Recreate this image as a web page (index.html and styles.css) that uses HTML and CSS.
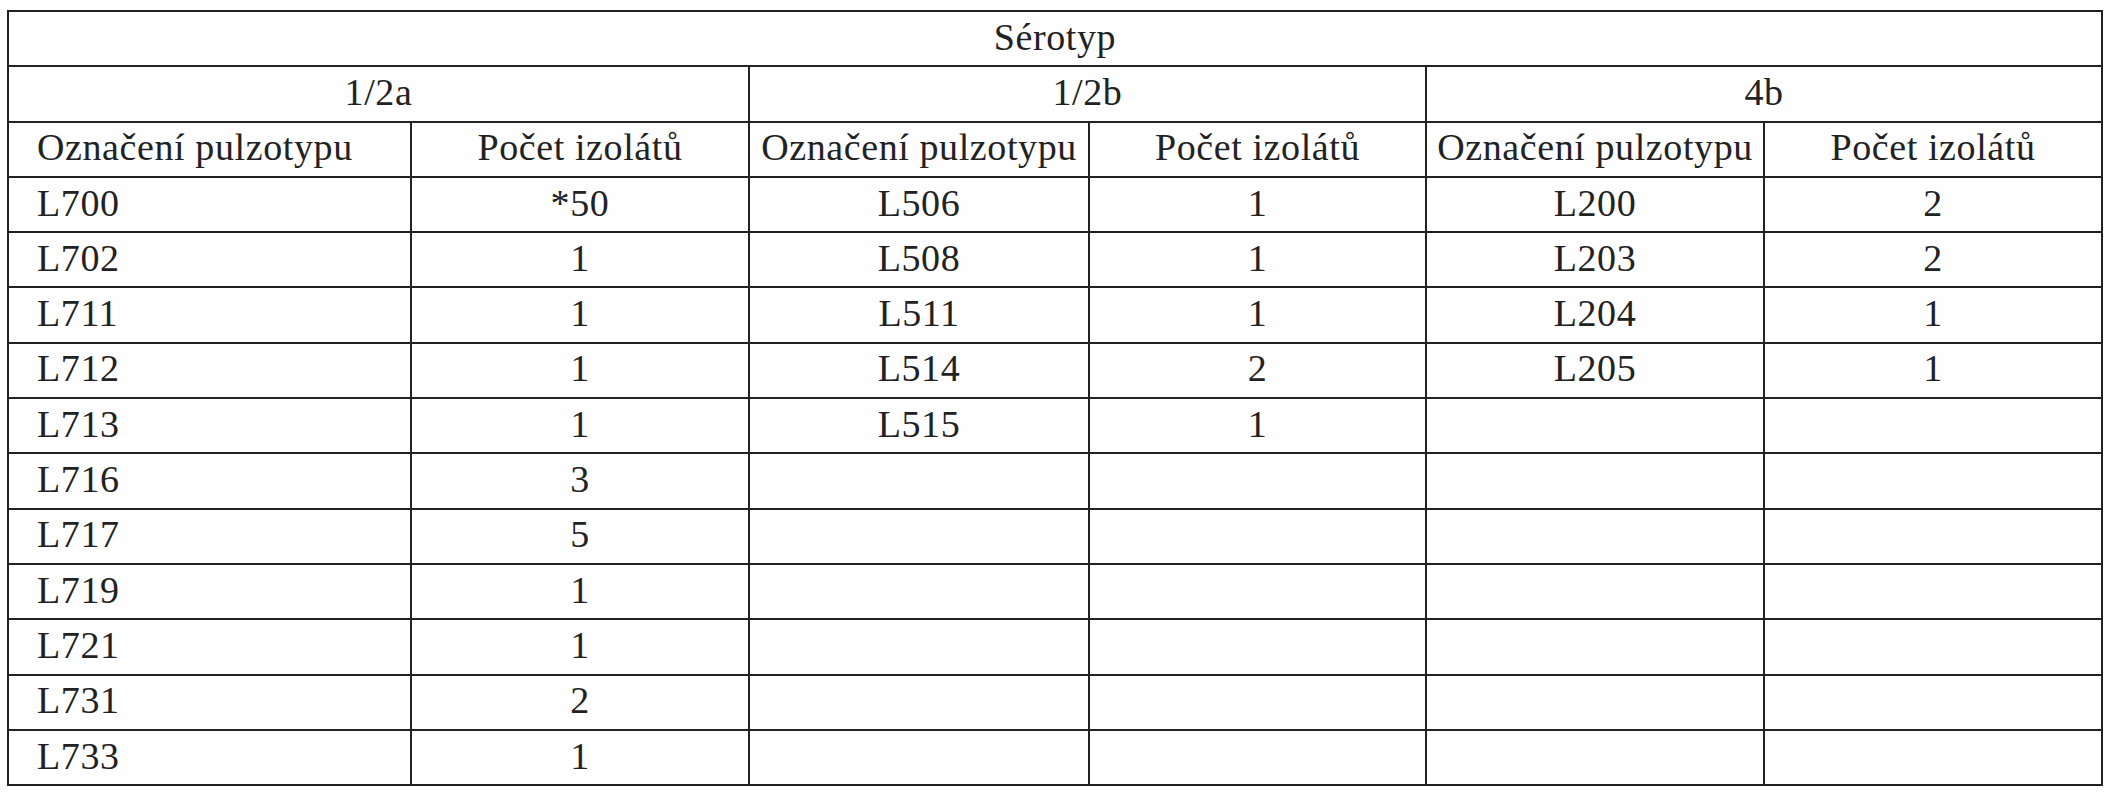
FILE: index.html
```html
<!DOCTYPE html>
<html lang="cs">
<head>
<meta charset="utf-8">
<title>Sérotyp</title>
<link rel="stylesheet" href="styles.css">
</head>
<body>
<table class="grid">
  <colgroup>
    <col class="c1"><col class="c2"><col class="c3"><col class="c4"><col class="c5"><col class="c6">
  </colgroup>
  <tbody>
    <tr><td colspan="6" class="mid">Sérotyp</td></tr>
    <tr><td colspan="2" class="mid">1/2a</td><td colspan="2" class="mid">1/2b</td><td colspan="2" class="mid">4b</td></tr>
    <tr><td class="lft">Označení pulzotypu</td><td class="mid">Počet izolátů</td><td class="mid">Označení pulzotypu</td><td class="mid">Počet izolátů</td><td class="mid">Označení pulzotypu</td><td class="mid">Počet izolátů</td></tr>
    <tr><td class="lft">L700</td><td class="mid">*50</td><td class="mid">L506</td><td class="mid">1</td><td class="mid">L200</td><td class="mid">2</td></tr>
    <tr><td class="lft">L702</td><td class="mid">1</td><td class="mid">L508</td><td class="mid">1</td><td class="mid">L203</td><td class="mid">2</td></tr>
    <tr><td class="lft">L711</td><td class="mid">1</td><td class="mid">L511</td><td class="mid">1</td><td class="mid">L204</td><td class="mid">1</td></tr>
    <tr><td class="lft">L712</td><td class="mid">1</td><td class="mid">L514</td><td class="mid">2</td><td class="mid">L205</td><td class="mid">1</td></tr>
    <tr><td class="lft">L713</td><td class="mid">1</td><td class="mid">L515</td><td class="mid">1</td><td></td><td></td></tr>
    <tr><td class="lft">L716</td><td class="mid">3</td><td></td><td></td><td></td><td></td></tr>
    <tr><td class="lft">L717</td><td class="mid">5</td><td></td><td></td><td></td><td></td></tr>
    <tr><td class="lft">L719</td><td class="mid">1</td><td></td><td></td><td></td><td></td></tr>
    <tr><td class="lft">L721</td><td class="mid">1</td><td></td><td></td><td></td><td></td></tr>
    <tr><td class="lft">L731</td><td class="mid">2</td><td></td><td></td><td></td><td></td></tr>
    <tr><td class="lft">L733</td><td class="mid">1</td><td></td><td></td><td></td><td></td></tr>
  </tbody>
</table>
</body>
</html>
```
FILE: styles.css
```css
html, body {
  margin: 0;
  padding: 0;
  background: #fefefe;
}
body {
  padding: 10px 0 0 7px;
  font-family: "Liberation Serif", "Times New Roman", serif;
  color: #222;
}
.grid {
  border-collapse: collapse;
  table-layout: fixed;
  width: 2096px;
  font-size: 38px;
  letter-spacing: 0.6px;
  line-height: 1;
}
.c1 { width: 403px; }
.c2 { width: 338px; }
.c3 { width: 340px; }
.c4 { width: 337px; }
.c5 { width: 338px; }
.c6 { width: 338px; }
.grid td {
  border: 2px solid #222;
  height: 49.3px;
  padding: 0 6px 4px;
  white-space: nowrap;
  overflow: hidden;
  vertical-align: middle;
}
.grid td.lft {
  text-align: left;
  padding-left: 28px;
}
.grid td.mid {
  text-align: center;
}
```
